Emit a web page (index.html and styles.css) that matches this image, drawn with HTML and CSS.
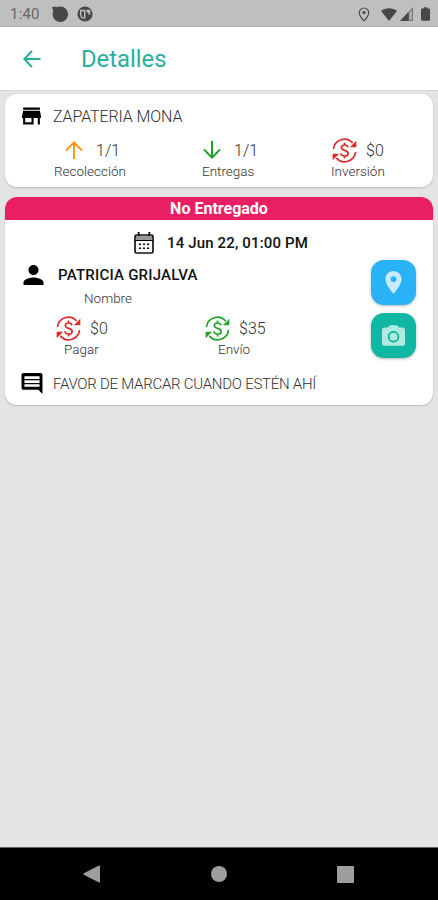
FILE: index.html
```html
<!DOCTYPE html>
<html lang="es">
<head>
<meta charset="utf-8">
<meta name="viewport" content="width=device-width, initial-scale=1">
<title>Detalles</title>
<link rel="stylesheet" href="styles.css">
</head>
<body>
<svg class="defs" width="0" height="0" aria-hidden="true">
  <symbol id="money" viewBox="0 0 26 26">
    <g fill="none" stroke="currentColor" stroke-width="1.700">
      <path d="M1.500 11.500A11.400 11.400 0 0 1 21.500 5.300"/>
      <path d="M24.500 14.500A11.400 11.400 0 0 1 4.500 20.700"/>
      <path d="M16.600 9.800c-.3-1.600-1.600-2.500-3.500-2.500-2 0-3.400 1-3.400 2.700 0 4 7.100 1.800 7.100 6 0 1.700-1.500 2.800-3.700 2.800-2.100 0-3.600-1-3.800-2.900M13 4.800v2.500M13 18.800v2.600"/>
    </g>
    <path fill="currentColor" d="M25.300 2.800v6.700h-6.700zM.7 23.200v-6.700h6.700z"/>
  </symbol>
</svg>
<div class="screen">
  <div class="status">
    <span class="clock">1:40</span>
    <svg class="notif" viewBox="0 0 18 18"><circle cx="9.300" cy="9.300" r="7.800"/><path d="M1 2l5-.5-3 7z"/></svg>
    <svg class="parking" viewBox="0 0 16 16"><circle cx="8" cy="8" r="7.600"/><path class="cut" fill-rule="evenodd" d="M3 3.800h5.400v8.800H5.200A6 6 0 0 1 3 9zM4.400 5.200v4.500l1.300 1.500H7v-6zM9.400 3.800h3.900v4.800h-2V6.200H9.400z"/></svg>
    <svg class="loc" viewBox="0 0 12 15"><path fill="none" stroke="#484848" stroke-width="1.200" d="M6 1a4.700 4.700 0 0 0-4.700 4.700C1.300 9 6 13.800 6 13.800S10.700 9 10.700 5.700A4.700 4.700 0 0 0 6 1z"/><circle cx="6" cy="5.600" r="1.700"/></svg>
    <svg class="wifi" viewBox="0 0 16 13"><path d="M0 2.900C4.600-.7 11.400-.7 16 2.900L8 13z"/></svg>
    <svg class="signal" viewBox="0 0 13 14"><path fill="#777" d="M13 0v14H0z"/><path d="M8.500 4.900V14H0z"/><path fill="#b8b8b8" d="M9.500 5.500l2.300-2.300v9.500H9.500z"/></svg>
    <svg class="battery" viewBox="0 0 10 15"><path d="M3 0h4v1.500h1.700c.7 0 1.300.6 1.300 1.300v10.900c0 .7-.6 1.300-1.300 1.300H1.300C.6 15 0 14.400 0 13.700V2.800c0-.7.6-1.300 1.300-1.300H3z"/></svg>
  </div>
  <header class="appbar">
    <svg class="back" viewBox="0 0 18 18"><path d="M17.500 9H1.500M9 1L1.300 9 9 17"/></svg>
    <h1><span>Detalles</span></h1>
  </header>
  <main>
    <section class="card shop">
      <div class="shop-title">
        <svg class="store" viewBox="2 4 20 16"><path d="M20 4H4v2h16V4zm1 10v-2l-1-5H4l-1 5v2h1v6h10v-6h4v6h2v-6h1zm-9 4H6v-4h6v4z"/></svg>
        <span class="t-shop">ZAPATERIA MONA</span>
      </div>
      <div class="stats">
        <div class="stat pick">
          <div class="value"><svg class="arrow orange" viewBox="0 0 18 18"><path d="M9 18V1.500M1 9.500L9 1.400l8 8.100"/></svg><span>1/1</span></div>
          <div class="label">Recolección</div>
        </div>
        <div class="stat drop">
          <div class="value"><svg class="arrow green" viewBox="0 0 18 18"><path d="M9 0v16.500M1 8.500l8 8.100 8-8.100"/></svg><span>1/1</span></div>
          <div class="label">Entregas</div>
        </div>
        <div class="stat inv">
          <div class="value"><svg class="money red"><use href="#money"/></svg><span>$0</span></div>
          <div class="label">Inversión</div>
        </div>
      </div>
    </section>
    <section class="card order">
      <div class="banner"><span>No Entregado</span></div>
      <div class="date">
        <svg class="calendar" viewBox="0 0 20 22"><rect x="1" y="3" width="18" height="18" rx="1.500" fill="none" stroke="#111" stroke-width="1.700"/><path fill="#999" d="M2 4h16v4H2z"/><path d="M1 8h18v1H1zM3.700 0h1.800v4H3.700zM14.500 0h1.800v4h-1.800zM5 11.500h2v1.600H5zM9 11.500h2v1.600H9zM13 11.500h2v1.600h-2zM5 15.500h2v1.600H5zM9 15.500h2v1.600H9zM13 15.500h2v1.600h-2z"/></svg>
        <span class="t-date">14 Jun 22, 01:00 PM</span>
      </div>
      <div class="details">
        <div class="info">
          <div class="person">
            <svg class="user" viewBox="4 4 16 16"><path d="M12 12c2.210 0 4-1.790 4-4s-1.790-4-4-4-4 1.790-4 4 1.790 4 4 4zm0 2c-2.670 0-8 1.340-8 4v2h16v-2c0-2.660-5.330-4-8-4z"/></svg>
            <span class="t-name">PATRICIA GRIJALVA</span>
          </div>
          <div class="nombre">Nombre</div>
          <div class="amounts">
            <div class="stat pay">
              <div class="value"><svg class="money red"><use href="#money"/></svg><span>$0</span></div>
              <div class="label l-pay">Pagar</div>
            </div>
            <div class="stat ship">
              <div class="value"><svg class="money green"><use href="#money"/></svg><span>$35</span></div>
              <div class="label l-ship">Envío</div>
            </div>
          </div>
        </div>
        <div class="actions">
          <button class="map" aria-label="Mapa"><svg viewBox="5 2 14 20"><path d="M12 2C8.130 2 5 5.130 5 9c0 5.250 7 13 7 13s7-7.750 7-13c0-3.870-3.130-7-7-7zm0 9.500a2.500 2.500 0 0 1 0-5 2.500 2.500 0 0 1 0 5z"/></svg></button>
          <button class="photo" aria-label="Foto"><svg viewBox="2 2 20 18"><path fill-rule="evenodd" d="M9 2L7.170 4H4c-1.100 0-2 .9-2 2v12c0 1.100.9 2 2 2h16c1.100 0 2-.9 2-2V6c0-1.100-.9-2-2-2h-3.170L15 2H9zm3 15c-2.760 0-5-2.240-5-5s2.240-5 5-5 5 2.240 5 5-2.240 5-5 5z"/><circle cx="12" cy="12" r="3.400"/></svg></button>
        </div>
      </div>
      <div class="note">
        <svg class="chat" viewBox="2 2 20 20"><path d="M21.990 4c0-1.100-.89-2-1.990-2H4c-1.100 0-2 .9-2 2v12c0 1.100.9 2 2 2h14l4 4-.01-18zM19.200 15.200H4.800v-2.400h14.400v2.400zm0-3.600H4.800V8.800h14.400v2.800zm0-4H4.800V5.200h14.400v2.400z"/></svg>
        <span class="t-note">FAVOR DE MARCAR CUANDO ESTÉN AHÍ</span>
      </div>
    </section>
  </main>
  <nav class="navbar">
    <svg class="nav-back" viewBox="0 0 17 18"><path d="M16 .5c.6 0 1 .3 1 1v15c0 .7-.4 1-1 1L.8 9.800c-.6-.4-.6-1.200 0-1.600z"/></svg>
    <span class="nav-home"></span>
    <span class="nav-recent"></span>
  </nav>
</div>
</body>
</html>
```
FILE: styles.css
```css
* { box-sizing: border-box; }
body { margin: 0; font-family: Roboto, sans-serif; color: #303030; }
svg { display: block; flex: none; }
span { white-space: nowrap; }
.defs { position: absolute; }
.screen { display: flex; flex-direction: column; width: 438px; height: 900px; background: #e4e4e4; overflow: hidden; }

.status { display: flex; align-items: center; height: 27px; padding: 2px 8px 0 10px; background: #bfbfbf; border-bottom: 1px solid #b2b2b2; fill: #484848; }
.clock { width: 41px; font-size: 15px; color: #666; letter-spacing: .2px; }
.notif { width: 18px; height: 18px; }
.parking { width: 16px; height: 16px; margin-left: 8px; }
.cut { fill: #bfbfbf; }
.loc { width: 12px; height: 15px; margin-left: auto; margin-right: 11px; }
.wifi { width: 16px; height: 13px; margin-right: 3px; }
.signal { width: 13px; height: 14px; margin-right: 8px; }
.battery { width: 9px; height: 14px; }

.appbar { display: flex; align-items: center; height: 64px; padding-left: 23px; background: #fff; border-bottom: 1px solid #d8d8d8; }
.back { width: 18px; height: 18px; fill: none; stroke: #27b09c; stroke-width: 2; }
h1 { margin: 0 0 0 40px; font-size: 23.800px; line-height: 30px; font-weight: 400; color: #27b09c; }

main { flex: 1; padding: 3px 5px 0; }
.card { background: #fff; border-radius: 12px; box-shadow: 0 1px 2px rgba(0,0,0,.2); overflow: hidden; }
.shop { height: 93px; margin-bottom: 10px; }
.shop-title { display: flex; align-items: center; height: 43px; padding: 1px 0 0 16px; }
.store { width: 21px; height: 18px; }
.t-shop { margin-left: 11px; font-size: 16px; font-weight: 300; letter-spacing: -.1px; }
.stats { display: flex; }
.value { display: flex; align-items: center; height: 26px; font-size: 16px; font-weight: 300; }
.label { font-size: 13.500px; line-height: 16px; font-weight: 300; white-space: nowrap; }
.arrow { width: 18px; height: 18px; margin-right: 13px; fill: none; stroke: currentColor; stroke-width: 2; }
.money { width: 25px; height: 25px; margin-right: 9px; }
.red { color: #de2929; }
.green { color: #20a52b; }
.orange { color: #fb961e; }
.pick { width: 148px; padding-left: 49px; }
.drop { width: 178px; padding-left: 49px; }
.pick .value { padding-left: 11px; }
.drop .value { padding-left: 1px; }
.inv .value { padding-left: 1px; }

.order { height: 208px; }
.banner { height: 23px; background: #e91e63; color: #fff; text-align: center; font-size: 16px; line-height: 23px; font-weight: 700; }
.date { display: flex; align-items: center; height: 40px; padding: 5px 0 0 129px; color: #111; }
.calendar { width: 20px; height: 22px; }
.t-date { margin-left: 13px; font-size: 15px; font-weight: 500; letter-spacing: .15px; }
.details { display: flex; height: 101px; }
.info { width: 366px; }
.person { display: flex; align-items: center; height: 29px; padding-left: 18px; color: #111; }
.user { width: 21px; height: 20px; }
.t-name { margin-left: 14px; font-size: 15px; font-weight: 500; letter-spacing: .22px; }
.nombre { padding-left: 79px; font-size: 13.500px; line-height: 18px; font-weight: 300; }
.amounts { display: flex; margin-top: 8px; }
.pay { width: 149px; padding-left: 51px; }
.ship { padding-left: 51px; }
.l-pay { padding-left: 8px; }
.l-ship { padding-left: 13px; }
.actions { display: flex; flex-direction: column; gap: 8px; }
button { display: flex; align-items: center; justify-content: center; width: 45px; height: 45px; padding: 0; border: 0; border-radius: 13px; box-shadow: 0 1px 3px rgba(0,0,0,.3); }
.map { background: #29b2f5; fill: #c6ebff; }
.map svg { width: 17px; height: 23px; }
.photo { background: #0fb8a3; fill: #b0ebe2; }
.photo svg { width: 23px; height: 21px; }
.photo circle { fill: #b0ebe2; }
.note { display: flex; align-items: center; height: 44px; padding: 1px 0 0 16px; }
.chat { width: 22px; height: 21px; }
.t-note { margin-left: 10px; font-size: 15px; font-weight: 300; letter-spacing: -.25px; }

.navbar { display: flex; align-items: center; height: 53px; padding: 0 84px 0 83px; justify-content: space-between; background: #000; border-top: 1px solid #666; }
.nav-back { width: 17px; height: 18px; fill: #9d9d9d; }
.nav-home { width: 16px; height: 16px; border-radius: 50%; background: #9d9d9d; }
.nav-recent { width: 17px; height: 17px; border-radius: 1px; background: #9d9d9d; }
```
